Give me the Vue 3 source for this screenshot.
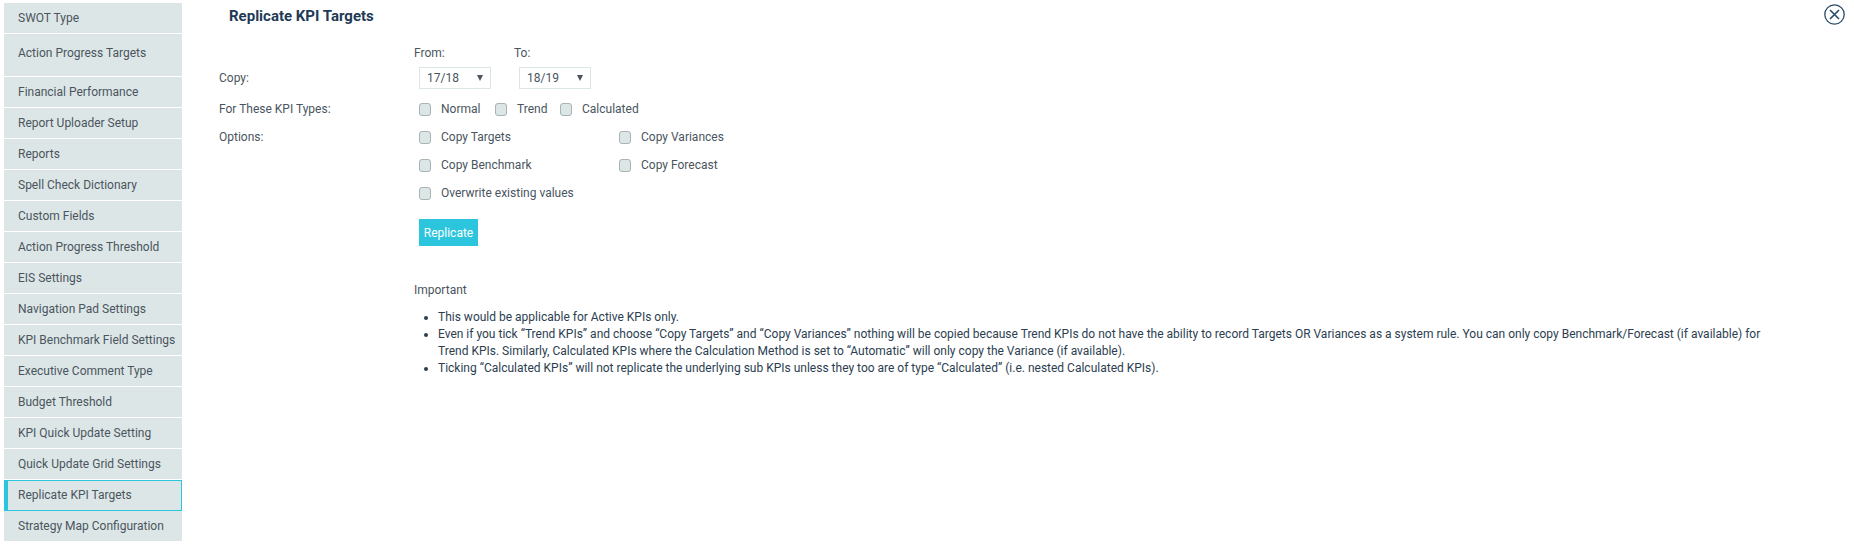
<script setup>
const menu = [
  { label: 'SWOT Type' },
  { label: 'Action Progress Targets', tall: true },
  { label: 'Financial Performance' },
  { label: 'Report Uploader Setup' },
  { label: 'Reports' },
  { label: 'Spell Check Dictionary' },
  { label: 'Custom Fields' },
  { label: 'Action Progress Threshold' },
  { label: 'EIS Settings' },
  { label: 'Navigation Pad Settings' },
  { label: 'KPI Benchmark Field Settings' },
  { label: 'Executive Comment Type' },
  { label: 'Budget Threshold' },
  { label: 'KPI Quick Update Setting' },
  { label: 'Quick Update Grid Settings' },
  { label: 'Replicate KPI Targets', active: true },
  { label: 'Strategy Map Configuration' }
]
</script>

<template>
  <div class="page">
    <ul class="sidebar">
      <li
        v-for="item in menu"
        :key="item.label"
        :class="{ tall: item.tall, active: item.active }"
      >{{ item.label }}</li>
    </ul>

    <div class="content">
      <h1 class="title">Replicate KPI Targets</h1>
      <svg class="close" width="21" height="21" viewBox="0 0 21 21">
        <circle cx="10.5" cy="10.5" r="9.7" fill="none" stroke="#2a4a68" stroke-width="1.3" />
        <path d="M6 6l9 9M15 6l-9 9" fill="none" stroke="#2a4a68" stroke-width="1.6" />
      </svg>

      <div class="form">
        <div class="row head">
          <span class="from">From:</span>
          <span>To:</span>
        </div>
        <div class="row copy">
          <span class="label">Copy:</span>
          <div class="selects">
            <div class="select">17/18<i></i></div>
            <div class="select">18/19<i></i></div>
          </div>
        </div>
        <div class="row types">
          <span class="label">For These KPI Types:</span>
          <div class="checks">
            <label class="check"><b></b>Normal</label>
            <label class="check"><b></b>Trend</label>
            <label class="check"><b></b>Calculated</label>
          </div>
        </div>
        <div class="row options">
          <span class="label">Options:</span>
          <div class="option-grid">
            <label class="check"><b></b>Copy Targets</label>
            <label class="check"><b></b>Copy Variances</label>
            <label class="check"><b></b>Copy Benchmark</label>
            <label class="check"><b></b>Copy Forecast</label>
            <label class="check"><b></b>Overwrite existing values</label>
          </div>
        </div>
        <button class="replicate">Replicate</button>
      </div>

      <div class="notes">
        <p>Important</p>
        <ul>
          <li>This would be applicable for Active KPIs only.</li>
          <li>Even if you tick “Trend KPIs” and choose “Copy Targets” and “Copy Variances” nothing will be copied because Trend KPIs do not have the ability to record Targets OR Variances as a system rule. You can only copy Benchmark/Forecast (if available) for Trend KPIs. Similarly, Calculated KPIs where the Calculation Method is set to “Automatic” will only copy the Variance (if available).</li>
          <li>Ticking “Calculated KPIs” will not replicate the underlying sub KPIs unless they too are of type “Calculated” (i.e. nested Calculated KPIs).</li>
        </ul>
      </div>
    </div>
  </div>
</template>

<style>
html, body {
  margin: 0;
  background: #fff;
  overflow: hidden;
}
</style>

<style scoped>
.page {
  display: flex;
  height: 550px;
  overflow: hidden;
  font-family: Roboto, sans-serif;
  font-size: 12px;
  line-height: 16px;
  color: #4a5560;
}

.sidebar {
  list-style: none;
  margin: 3px 0 0 4px;
  padding: 0;
  width: 178px;
  flex: none;
}

.sidebar li {
  box-sizing: border-box;
  height: 31px;
  line-height: 30px;
  padding-left: 14px;
  background: #dde6e6;
  border-bottom: 1px solid #fff;
  white-space: nowrap;
}

.sidebar li.tall {
  height: 43px;
  line-height: 38px;
}

.sidebar li.active {
  border: 1px solid #2cc5de;
  border-left: 4px solid #2cc5de;
  padding-left: 10px;
  line-height: 28px;
}

.content {
  flex: 1;
  padding: 0 0 0 37px;
  position: relative;
}

.title {
  margin: 0 0 0 10px;
  padding-top: 7px;
  font-size: 15px;
  line-height: 19px;
  font-weight: 700;
  color: #1f3a56;
}

.close {
  position: absolute;
  top: 4px;
  right: 9px;
}

.form {
  margin-top: 19px;
}

.row {
  display: flex;
}

.head {
  padding-left: 195px;
  height: 22px;
}

.head .from {
  width: 100px;
}

.label {
  width: 200px;
  flex: none;
}

.copy .label {
  padding-top: 3px;
}

.selects {
  display: flex;
  gap: 28px;
}

.select {
  box-sizing: border-box;
  width: 72px;
  height: 22px;
  line-height: 20px;
  padding-left: 7px;
  border: 1px solid #dde6e6;
  position: relative;
}

.select i {
  position: absolute;
  top: 7px;
  right: 7px;
  border: 3px solid transparent;
  border-top: 6px solid #4a5560;
  border-bottom: 0;
}

.types {
  margin-top: 12px;
}

.checks {
  display: grid;
  grid-template-columns: 76px 65px auto;
}

.check {
  display: flex;
  align-items: center;
  height: 16px;
}

.check b {
  box-sizing: border-box;
  width: 12px;
  height: 13px;
  margin-right: 10px;
  background: #dde6e6;
  border: 1px solid #a9b3b3;
  border-radius: 3px;
}

.options {
  margin-top: 12px;
}

.option-grid {
  display: grid;
  grid-template-columns: 200px 200px;
  row-gap: 12px;
}

.replicate {
  display: block;
  width: 59px;
  height: 27px;
  margin: 18px 0 0 200px;
  padding: 0;
  border: 0;
  background: #2cc5de;
  color: #fff;
  font: 12px Roboto, sans-serif;
}

.notes {
  margin: 36px 0 0 195px;
  width: 1361px;
  line-height: 17px;
}

.notes p {
  margin: 0 0 10px;
}

.notes ul {
  margin: 0;
  padding-left: 24px;
  color: #2c3e50;
}
</style>
